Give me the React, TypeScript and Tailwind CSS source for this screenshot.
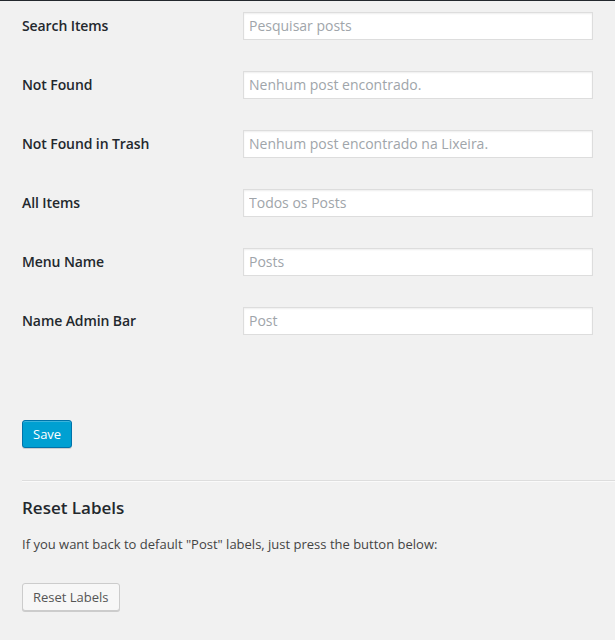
import React from "react";

const rows: [string, string][] = [
  ["Search Items", "Pesquisar posts"],
  ["Not Found", "Nenhum post encontrado."],
  ["Not Found in Trash", "Nenhum post encontrado na Lixeira."],
  ["All Items", "Todos os Posts"],
  ["Menu Name", "Posts"],
  ["Name Admin Bar", "Post"],
];

export default function App() {
  return (
    <div
      className="w-[615px] h-[640px] overflow-hidden bg-[#f1f1f1] border-t border-[#23282d] pl-[22px] text-[#23282d]"
      style={{ fontFamily: '"Open Sans", "Noto Sans", sans-serif' }}
    >
      <div className="flex flex-col gap-[31px] pt-[11px]">
        {rows.map(([label, value]) => (
          <div key={label} className="flex items-center h-[28px]">
            <div className="w-[221px] text-[14px] font-semibold leading-[20px] tracking-[-0.1px]">{label}</div>
            <input
              readOnly
              placeholder={value}
              className="w-[350px] h-[28px] bg-white border border-[#dddddd] px-[5px] pb-[1px] text-[14px] text-[#32373c] placeholder:text-[#a0a5aa] shadow-[inset_0_1px_2px_rgba(0,0,0,0.07)] outline-none"
            />
          </div>
        ))}
      </div>
      <div className="mt-[85px]">
        <button className="h-[28px] px-[10px] rounded-[3px] bg-[#00a0d2] border border-[#0073aa] text-white text-[13px] leading-[26px] shadow-[inset_0_1px_0_rgba(120,200,230,0.5),0_1px_0_rgba(0,0,0,0.15)]">
          Save
        </button>
      </div>
      <div className="mt-[32px] h-[2px] border-t border-[#dddddd] border-b border-b-[#fafafa]" />
      <h2 className="mt-[14px] text-[17px] leading-[24px] font-semibold text-[#23282d]">Reset Labels</h2>
      <p className="mt-[14px] text-[13px] leading-[20px] text-[#444]">
        If you want back to default "Post" labels, just press the button below:
      </p>
      <div className="mt-[29px]">
        <button className="h-[28px] px-[10px] rounded-[3px] bg-[#f7f7f7] border border-[#cccccc] text-[#555] text-[13px] leading-[26px] shadow-[0_1px_0_#cccccc]">
          Reset Labels
        </button>
      </div>
    </div>
  );
}
